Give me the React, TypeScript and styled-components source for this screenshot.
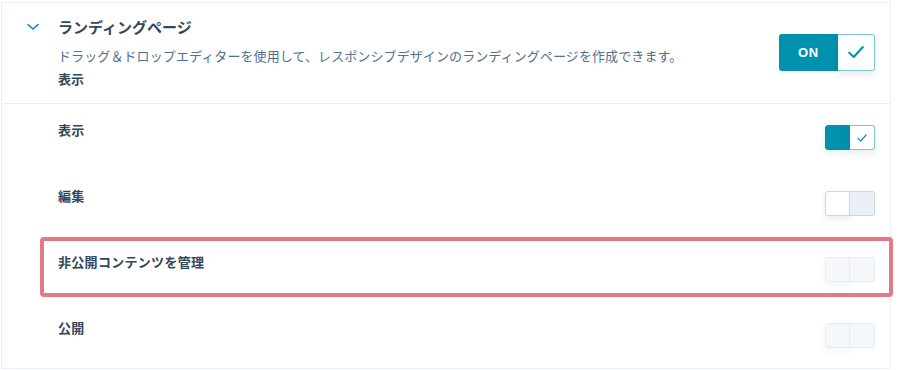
import React from 'react';
import styled, { createGlobalStyle } from 'styled-components';

const GlobalStyle = createGlobalStyle`
  body {
    margin: 0;
    background: #ffffff;
    font-family: "Noto Sans CJK JP", "Noto Sans", sans-serif;
    color: #33475b;
  }
`;

type ToggleState = 'on' | 'off' | 'disabled';

interface Permission {
  label: string;
  state: ToggleState;
  highlighted?: boolean;
}

const permissions: Permission[] = [
  { label: '表示', state: 'on' },
  { label: '編集', state: 'off' },
  { label: '非公開コンテンツを管理', state: 'disabled', highlighted: true },
  { label: '公開', state: 'disabled' },
];

const CheckIcon: React.FC<{ size: number }> = ({ size }) => (
  <svg width={size} height={size} viewBox="0 0 16 16" fill="none">
    <path
      d="M2.5 8.5 L6.2 12 L13.5 4"
      stroke="#0091ae"
      strokeWidth="1.6"
      strokeLinecap="round"
      strokeLinejoin="round"
    />
  </svg>
);

const Chevron = () => (
  <svg width="12" height="8" viewBox="0 0 12 8" fill="none">
    <path
      d="M1 1.5 L6 6 L11 1.5"
      stroke="#0091ae"
      strokeWidth="1.6"
      strokeLinecap="round"
      strokeLinejoin="round"
    />
  </svg>
);

const App: React.FC = () => {
  return (
    <>
      <GlobalStyle />
      <Panel>
        <Header>
          <ChevronBox>
            <Chevron />
          </ChevronBox>
          <HeaderText>
            <Title>ランディングページ</Title>
            <Description>
              ドラッグ＆ドロップエディターを使用して、レスポンシブデザインのランディングページを作成できます。
            </Description>
            <Summary>表示</Summary>
          </HeaderText>
          <BigToggle>
            <OnLabel>ON</OnLabel>
            <BigCheck>
              <CheckIcon size={20} />
            </BigCheck>
          </BigToggle>
        </Header>
        {permissions.map((p) => (
          <Row key={p.label}>
            <RowLabel>{p.label}</RowLabel>
            <SmallToggle $state={p.state}>
              <Knob $state={p.state} />
              <Track $state={p.state}>
                {p.state === 'on' && <CheckIcon size={12} />}
              </Track>
            </SmallToggle>
            {p.highlighted && <Highlight />}
          </Row>
        ))}
      </Panel>
    </>
  );
};

const Panel = styled.div`
  margin: 2px 17px 0 1px;
  border: 1px solid #eaf0f6;
  background: #ffffff;
`;

const Header = styled.div`
  display: flex;
  align-items: flex-start;
  padding: 12px 15px 14px 0;
  border-bottom: 1px solid #eaf0f6;
`;

const ChevronBox = styled.div`
  width: 56px;
  height: 24px;
  display: flex;
  align-items: center;
  justify-content: center;
  padding-left: 2px;
  box-sizing: border-box;
  margin-left: 2px;
  margin-right: -2px;
`;

const HeaderText = styled.div`
  flex: 1;
  display: flex;
  flex-direction: column;
`;

const Title = styled.div`
  font-size: 15px;
  line-height: 24px;
  font-weight: 600;
  color: #33475b;
`;

const Description = styled.div`
  margin-top: 7px;
  font-size: 13px;
  line-height: 20px;
  color: #516f90;
  letter-spacing: 0.1px;
`;

const Summary = styled.div`
  margin-top: 3px;
  font-size: 13px;
  line-height: 20px;
  font-weight: 700;
  color: #33475b;
`;

const BigToggle = styled.div`
  align-self: center;
  display: flex;
  width: 96px;
  height: 37px;
  border-radius: 3px;
`;

const OnLabel = styled.div`
  width: 59px;
  display: flex;
  align-items: center;
  justify-content: center;
  background: #0091ae;
  color: #ffffff;
  font-family: "Liberation Sans", "Noto Sans", sans-serif;
  font-size: 13px;
  font-weight: 700;
  letter-spacing: 0.8px;
  border-radius: 3px 0 0 3px;
`;

const BigCheck = styled.div`
  width: 37px;
  box-sizing: border-box;
  display: flex;
  align-items: center;
  justify-content: center;
  background: #ffffff;
  border: 1px solid #7fc8d6;
  border-left: none;
  border-radius: 0 3px 3px 0;
  box-shadow: 0 3px 6px rgba(45, 62, 80, 0.12);
`;

const Row = styled.div`
  position: relative;
  height: 66px;
  box-sizing: border-box;
  display: flex;
  justify-content: space-between;
  align-items: flex-start;
  padding: 16px 15px 0 56px;
`;

const RowLabel = styled.div`
  font-size: 13px;
  line-height: 20px;
  font-weight: 700;
  letter-spacing: 0.3px;
  color: #33475b;
`;

const SmallToggle = styled.div<{ $state: ToggleState }>`
  margin-top: 5px;
  display: flex;
  width: 50px;
  height: 25px;
  border-radius: 3px;
  opacity: ${(p) => (p.$state === 'disabled' ? 0.45 : 1)};
`;

const Knob = styled.div<{ $state: ToggleState }>`
  width: 25px;
  box-sizing: border-box;
  border-radius: 3px 0 0 3px;
  background: ${(p) => (p.$state === 'on' ? '#0091ae' : p.$state === 'disabled' ? '#eaf0f6' : '#ffffff')};
  border: 1px solid ${(p) => (p.$state === 'on' ? '#0091ae' : '#cbd6e2')};
  box-shadow: 0 3px 6px rgba(45, 62, 80, 0.1);
`;

const Track = styled.div<{ $state: ToggleState }>`
  width: 25px;
  box-sizing: border-box;
  display: flex;
  align-items: center;
  justify-content: center;
  border-radius: 0 3px 3px 0;
  background: ${(p) => (p.$state === 'on' ? '#ffffff' : '#eaf0f6')};
  border: 1px solid ${(p) => (p.$state === 'on' ? '#7fc8d6' : '#cbd6e2')};
  border-left: none;
  box-shadow: ${(p) => (p.$state === 'on' ? '0 3px 6px rgba(45, 62, 80, 0.1)' : 'none')};
`;

const Highlight = styled.div`
  position: absolute;
  top: 1px;
  left: 38px;
  right: -3px;
  height: 60px;
  box-sizing: border-box;
  border: 4px solid #e47a88;
  border-radius: 4px;
  pointer-events: none;
`;

export default App;
